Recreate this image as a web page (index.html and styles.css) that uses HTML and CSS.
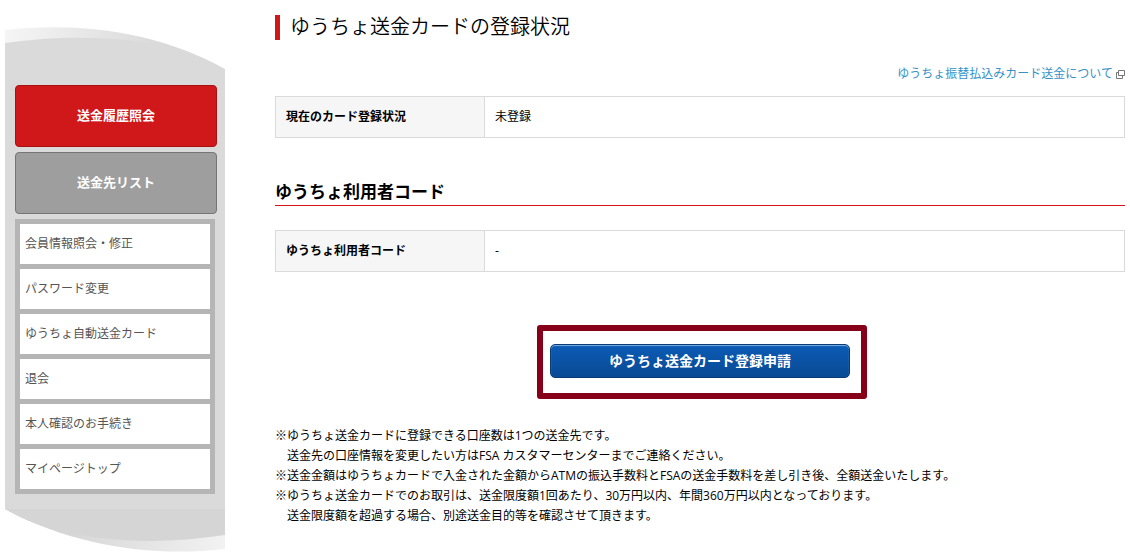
FILE: index.html
```
<!DOCTYPE html>
<html lang="ja">
<head>
  <meta charset="UTF-8">
  <title>ゆうちょ送金カードの登録状況</title>
  <link rel="stylesheet" href="styles.css">
</head>
<body>
  <div class="page">
    <aside class="sidebar">
      <svg class="cap" viewBox="0 0 220 48" preserveAspectRatio="none" aria-hidden="true">
        <defs>
          <linearGradient id="capTop" x1="0" x2="1">
            <stop offset="0" stop-color="#f5f5f5"/>
            <stop offset="0.7" stop-color="#dadada"/>
          </linearGradient>
        </defs>
        <path d="M0 3 C70 -5 150 3 220 42 V48 H0 Z" fill="url(#capTop)"/>
        <path d="M0 16 C60 8 115 9 170 21 L220 43 V48 H0 Z" fill="#dadada"/>
      </svg>
      <div class="sidebar-body">
        <a class="nav-btn history" href="#">送金履歴照会</a>
        <a class="nav-btn list" href="#">送金先リスト</a>
        <ul class="menu">
          <li><a href="#">会員情報照会・修正</a></li>
          <li><a href="#">パスワード変更</a></li>
          <li><a href="#">ゆうちょ自動送金カード</a></li>
          <li><a href="#">退会</a></li>
          <li><a href="#">本人確認のお手続き</a></li>
          <li><a href="#">マイページトップ</a></li>
        </ul>
      </div>
      <svg class="cap" viewBox="0 0 220 43" preserveAspectRatio="none" aria-hidden="true">
        <defs>
          <linearGradient id="capBottom" x1="0" x2="1">
            <stop offset="0.25" stop-color="#d5d5d5"/>
            <stop offset="1" stop-color="#f2f2f2"/>
          </linearGradient>
        </defs>
        <path d="M0 0 H220 V40 C150 48 70 38 0 0 Z" fill="url(#capBottom)"/>
        <path d="M0 0 H220 V26 C160 35 105 34 50 21 Q24 14 0 0 Z" fill="#d5d5d5"/>
      </svg>
    </aside>

    <main class="content">
      <h1>ゆうちょ送金カードの登録状況</h1>
      <p class="about">
        <a href="#">ゆうちょ振替払込みカード送金について</a>
        <svg width="9" height="9" viewBox="0 0 9 9" aria-hidden="true">
          <path d="M2.5 .5 H8.5 V5.5 H2.5 Z M2.5 2.5 H.5 V8.5 H6.5 V5.5" fill="none" stroke="#777"/>
        </svg>
      </p>
      <table>
        <tr><th scope="row">現在のカード登録状況</th><td>未登録</td></tr>
      </table>

      <h2>ゆうちょ利用者コード</h2>
      <table>
        <tr><th scope="row">ゆうちょ利用者コード</th><td>-</td></tr>
      </table>

      <div class="apply">
        <div class="frame">
          <button type="button">ゆうちょ送金カード登録申請</button>
        </div>
      </div>

      <ul class="notes">
        <li>※ゆうちょ送金カードに登録できる口座数は1つの送金先です。<br>送金先の口座情報を変更したい方はFSA カスタマーセンターまでご連絡ください。</li>
        <li>※送金金額はゆうちょカードで入金された金額からATMの振込手数料とFSAの送金手数料を差し引き後、全額送金いたします。</li>
        <li>※ゆうちょ送金カードでのお取引は、送金限度額1回あたり、30万円以内、年間360万円以内となっております。<br>送金限度額を超過する場合、別途送金目的等を確認させて頂きます。</li>
      </ul>
    </main>
  </div>
</body>
</html>
```
FILE: styles.css
```
* { box-sizing: border-box; }
body { margin: 0; background: #fff; color: #000; font-family: "Open Sans", "Noto Sans CJK JP", sans-serif; font-size: 12px; line-height: 20px; }
h1, h2, p, ul { margin: 0; padding: 0; }
ul { list-style: none; }
a { text-decoration: none; }

.page { display: flex; gap: 50px; padding: 0 5px; }

/* sidebar */
.sidebar { flex: 0 0 220px; padding-top: 27px; }
.cap { display: block; width: 100%; }
.sidebar-body { display: flex; flex-direction: column; gap: 5px; padding: 10px 8px 15px 10px; background: #dadada; }
.nav-btn { border: 1px solid; border-radius: 4px; padding: 19px 0 21px; color: #fff; font-size: 13px; font-weight: bold; text-align: center; }
.history { background: #d0171a; border-color: #a81114; }
.list { background: #9e9e9e; border-color: #757575; }
.menu { display: flex; flex-direction: column; gap: 5px; margin-right: 2px; padding: 5px; background: #b5b5b5; }
.menu a { display: block; padding: 10px 5px; background: #fff; color: #555; }

/* content */
.content { flex: 1; min-width: 0; padding-top: 15px; }
h1 { border-left: 5px solid #d0171a; padding: 0 0 2px 10px; font-size: 20px; font-weight: 350; line-height: 23px; }
.about { display: flex; justify-content: flex-end; align-items: center; gap: 3px; margin: 24px 0 12px; }
.about a { color: #3492c8; }
table { width: 100%; border-collapse: collapse; table-layout: fixed; }
th, td { border: 1px solid #dadada; padding: 10px; text-align: left; }
th { width: 209px; background: #f6f6f6; font-weight: bold; }
h2 { margin: 41px 0 24px; border-bottom: 1px solid #d7141a; padding-bottom: 1px; font-size: 17px; line-height: 25px; }

.apply { display: flex; justify-content: center; margin: 53px 0 27px; padding-left: 4px; }
.frame { width: 330px; border: 6px solid #870019; border-radius: 3px; padding: 13px 11px 15px 7px; }
.frame button { display: block; width: 100%; height: 34px; border: 1px solid #0b3c78; border-radius: 5px; padding: 0 0 2px; background: linear-gradient(#0c5bb5, #084a94); box-shadow: inset 0 1px 1px #7aaee0; color: #fff; font: bold 14px/20px "Noto Sans CJK JP", sans-serif; }

.notes li { padding-left: 12px; text-indent: -12px; }
```
